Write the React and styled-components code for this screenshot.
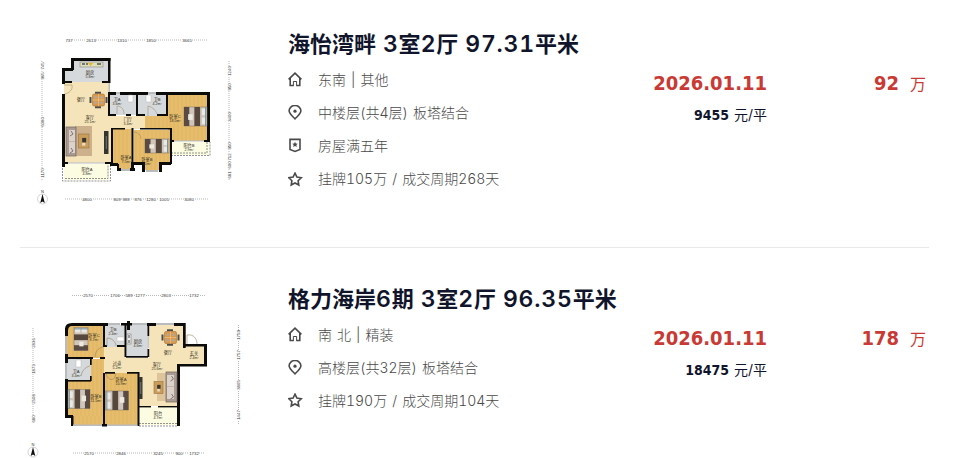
import React from 'react';
import styled, { createGlobalStyle } from 'styled-components';

const GlobalStyle = createGlobalStyle`
  * {
    box-sizing: border-box;
  }

  body {
    margin: 0;
    background: #fff;
    font-family: Inter, "Noto Sans CJK SC", sans-serif;
  }
`;

const List = styled.main`
  width: 909px;
  height: 100vh;
  margin-left: 20px;
  overflow: hidden;
`;

const Item = styled.article`
  display: grid;
  grid-template-columns: 268px minmax(0, 1fr) 160px 159px;
  height: 255px;
  padding: 35px 3px 0 0;
  border-bottom: 1px solid #e9e9eb;

  &:first-child {
    height: 248px;
    padding-top: 28px;
  }

  &:last-child {
    height: 210px;
    border-bottom: 0;
    overflow: hidden;
  }
`;

const Plan = styled.svg`
  display: block;
  width: 240px;
  height: 180px;
  font-family: "Liberation Sans", "Noto Sans CJK SC", sans-serif;
`;

const Title = styled.h2`
  height: 32px;
  margin: 0;
  color: #11152b;
  font-size: 22px;
  line-height: 32px;
  font-weight: 600;
  font-variant-numeric: tabular-nums;
  word-spacing: 1px;
  white-space: nowrap;
`;

const Digits = styled.span`
  font-size: 23px;
  line-height: 1;
  letter-spacing: 0.8px;
`;

const Facts = styled.ul`
  display: grid;
  grid-auto-rows: 33.2px;
  margin: 3px 0 0;
  padding: 0;
  list-style: none;
`;

const Fact = styled.li`
  display: flex;
  align-items: center;
  gap: 15px;
  color: #4a4a4a;
  font-size: 14px;
  line-height: 20px;
  font-weight: 300;
  font-variant-numeric: tabular-nums;
  word-spacing: 1.3px;
  white-space: nowrap;

  svg {
    flex: none;
  }
`;

const Deal = styled.div`
  padding-top: 39px;
  text-align: right;
  white-space: nowrap;
`;

const Strong = styled.div`
  color: #c93a35;
  font-family: "DejaVu Sans Condensed", "DejaVu Sans", sans-serif;
  font-stretch: condensed;
  font-size: 20px;
  line-height: 32px;
  font-weight: 700;
`;

const Unit = styled.span`
  margin-left: ${(props) => props.$gap}px;
  font-family: Inter, "Noto Sans CJK SC", sans-serif;
  font-size: ${(props) => props.$size}px;
  font-weight: 400;
`;

const Average = styled.div`
  color: #11152b;
  font-family: "DejaVu Sans Condensed", "DejaVu Sans", sans-serif;
  font-stretch: condensed;
  font-size: 14px;
  line-height: 32px;
  font-weight: 700;
`;

const iconPaths = {
  home: (
    <>
      <path d="M.6 7.4 7 1.2l6.4 6.2M2.2 6.2v7.3h2.9M11.8 6.2v7.3H8.9" />
      <path d="M5.4 14.2V9.3M8.6 14.2V9.3M5.4 9.5h3.2" strokeWidth="1" />
    </>
  ),
  pin: (
    <>
      <path d="M7 13.8C4.4 11.4 1.1 8.6 1.1 5.8a5.9 5.3 0 0 1 11.8 0c0 2.8-3.3 5.6-5.9 8Z" />
      <circle cx="7" cy="6.2" r="1.6" fill="currentColor" stroke="none" />
    </>
  ),
  badge: (
    <>
      <path d="M2 1.4h10v10.1l-5 1.9-5-1.9Z" />
      <path d="m7 3.8.8 1.8 2 .2-1.5 1.3.5 2L7 8l-1.8 1.1.5-2-1.5-1.3 2-.2Z" fill="currentColor" stroke="none" />
    </>
  ),
  star: <path d="m7 1.2 1.9 3.9 4.3.6-3.1 3 .7 4.3L7 11l-3.8 2 .7-4.3-3.1-3 4.3-.6Z" />,
};

function Icon({ name }) {
  return (
    <svg width="15" height="15" viewBox="0 0 15 15" fill="none" stroke="currentColor" strokeWidth="1.6">
      {iconPaths[name]}
    </svg>
  );
}

const fills = { tile: '#d6d9db', cream: '#f5e4b9', wood: '#e6bd6c', balcony: '#fcfce3', wall: '#0b0b0a', glass: '#b8bcbf' };

// every block is [x, y, width, height]
function Blocks({ kind, items }) {
  return items.map(([x, y, w, h]) => (
    <rect key={`${x}-${y}-${w}`} x={x} y={y} width={w} height={h} fill={fills[kind]} />
  ));
}

function Grain({ items }) {
  return items.map(([x, y, w, h]) => (
    <g key={`${x}-${y}`} stroke="#bf8c3b" strokeWidth=".4" opacity=".35">
      {Array.from({ length: Math.floor(w / 4) }, (_, i) => (
        <line key={i} x1={x + i * 4 + 2} y1={y} x2={x + i * 4 + 2} y2={y + h} />
      ))}
    </g>
  ));
}

function Label({ x, y, name, area }) {
  return (
    <g fill="#342e22" fontSize="4.2" textAnchor="middle">
      <text x={x} y={y}>{name}</text>
      {area && <text x={x} y={y + 4} fontSize="3.6">{area}</text>}
    </g>
  );
}

// the pillow end points right unless turned
function Bed({ x, y, w, h, turn = 0 }) {
  return (
    <g transform={`translate(${x} ${y}) rotate(${turn} ${w / 2} ${h / 2})`}>
      <rect width={w} height={h} fill="#cfc5ba" stroke="#80705f" strokeWidth=".5" />
      <rect width={w * 0.23} height={h} fill="#594b43" />
      <rect x={w * 0.45} width={w * 0.25} height={h} fill="#57483e" />
      <rect x={w * 0.18} y={h * 0.38} width={w * 0.2} height={h * 0.3} fill="#eee8df" />
      <rect x={w * 0.78} y={h * 0.08} width={w * 0.18} height={h * 0.36} rx="1" fill="#e9e8e4" />
      <rect x={w * 0.78} y={h * 0.55} width={w * 0.18} height={h * 0.36} rx="1" fill="#e9e8e4" />
      <path d={`M${w * 0.94} 0v${h}`} stroke="#72919c" />
    </g>
  );
}

function Dining({ x, y }) {
  return (
    <g transform={`translate(${x} ${y})`}>
      <path d="M-3.5-7.2h6M-3.5 7.2h6M-8-3v6M8-3v6" stroke="#4c4b4a" strokeWidth="2" />
      <rect x="-6" y="-6" width="12" height="12" rx="1.5" fill="#d99a4d" stroke="#a1713e" strokeWidth=".6" />
      <path d="M-6 0H6M0-6V6" stroke="#efc386" strokeWidth=".7" />
      <g fill="#a9abae">
        <circle cx="-2.8" cy="-2.8" r="1.2" />
        <circle cx="2.8" cy="-2.8" r="1.2" />
        <circle cx="-2.8" cy="2.8" r="1.2" />
        <circle cx="2.8" cy="2.8" r="1.2" />
      </g>
    </g>
  );
}

function Sofa({ x, y, w, h, flip }) {
  return (
    <g transform={`translate(${x} ${y})`}>
      <rect width={w} height={h} fill="#a99b93" stroke="#71645c" strokeWidth=".7" />
      <rect x={flip ? 1 : 3} y="3" width={w - 4} height={h / 2 - 3.5} fill="#ddd2ca" />
      <rect x={flip ? 1 : 3} y={h / 2} width={w - 4} height={h / 2 - 3} fill="#ddd2ca" />
      <path d={`M${w / 2} 4l2 3-3 2M${w / 2} ${h - 8}l2 3-3 2`} fill="none" stroke="#665b57" strokeWidth=".8" />
    </g>
  );
}

function CoffeeTable({ x, y, w, h }) {
  return (
    <g>
      <rect x={x} y={y} width={w} height={h} fill="#c99e5a" stroke="#987240" strokeWidth=".6" />
      <rect x={x + w * 0.35} y={y + h * 0.28} width={w * 0.38} height={h * 0.32} fill="#393631" />
      <rect x={x + w * 0.35} y={y + h * 0.63} width={w * 0.3} height={h * 0.2} fill="#e9ddc4" />
    </g>
  );
}

function Television({ x, y, w, h }) {
  return (
    <g>
      <rect x={x} y={y} width={w} height={h} fill="#343431" />
      <path d={`M${x + w / 2} ${y + 5}v${h - 10}`} stroke="#777" />
    </g>
  );
}

function Ruler({ from, to, at, vertical, marks }) {
  return (
    <g fill="#333" fontSize="4.3" textAnchor="middle">
      <path
        d={vertical ? `M${at} ${from}V${to}` : `M${from} ${at}H${to}`}
        stroke="#999"
        strokeWidth=".7"
        strokeDasharray="1 1"
      />
      {marks.map(([pos, value]) => {
        const cx = vertical ? at : pos;
        const cy = vertical ? pos : at;
        return (
          <g key={pos} transform={`translate(${cx} ${cy}) rotate(${vertical ? -90 : 0})`}>
            <rect x={-value.length * 1.25} y="-2" width={value.length * 2.5} height="4" fill="#fff" />
            <text y="1.5">{value}</text>
          </g>
        );
      })}
    </g>
  );
}

function Compass({ x, y }) {
  return (
    <g>
      <circle cx={x} cy={y} r="5" fill="#fff" stroke="#aaa" strokeWidth=".5" />
      <path d={`M${x} ${y - 5}l2.3 9-2.3-1.6-2.3 1.6Z`} fill="#111" />
      <text x={x} y={y - 6.5} fontSize="4" textAnchor="middle" fill="#333">N</text>
    </g>
  );
}

const bayWood = [[113, 129, 19, 36], [118, 160, 13, 10], [134, 130, 37, 33], [145, 116, 25, 13], [145, 160, 14, 10], [168, 95, 40, 46]];

function BayPlan() {
  return (
    <Plan viewBox="20 28 240 180">
      <Ruler from={66} to={208} at={40} marks={[[69, '737'], [91, '2613'], [122, '1310'], [151, '1850'], [187, '3665']]} />
      <Ruler from={61} to={180} at={42} vertical marks={[[66, '745'], [76, '965'], [122, '6080'], [173, '1170']]} />
      <Ruler from={61} to={180} at={229} vertical marks={[[71, '1240'], [87, '950'], [117, '3400'], [146, '950'], [157, '712'], [165, '600'], [175, '681']]} />
      <Ruler from={65} to={208} at={199} marks={[[87, '4800'], [117, '809'], [126, '988'], [138, '876'], [151, '1280'], [164, '1005'], [189, '3080']]} />
      <Blocks kind="tile" items={[[72, 60, 37, 22], [64, 70, 44, 12], [110, 94, 27, 21], [137, 94, 30, 22]]} />
      <Blocks kind="cream" items={[[64, 82, 46, 81], [109, 116, 36, 13], [108, 125, 5, 38]]} />
      <Blocks kind="wood" items={bayWood} />
      <Grain items={bayWood} />
      <Blocks kind="balcony" items={[[64, 164, 45, 16], [171, 142, 38, 13]]} />
      <g fill="none" stroke="#777" strokeWidth=".8" strokeDasharray="2 1">
        <path d="M62.5 165v16h48v-16M65 178.5h43V165" />
        <path d="M171 155.5h39V142M171 153h36v-11" />
      </g>
      <Blocks kind="glass" items={[[108.5, 82, 1.5, 10], [115, 92, 5, 2], [148, 92, 8, 2], [68, 162.5, 38, 1], [174, 140.5, 32, 1], [120, 169, 10, 2], [146, 170, 12, 2]]} />
      <Blocks
        kind="wall"
        items={[
          [71, 58, 39.5, 3], [71, 58, 3, 12], [62, 68, 11, 3], [62, 68, 3, 16], [62, 94, 3, 73], [62, 81, 10, 2],
          [108, 58, 2.5, 25], [102, 81, 8, 2], [108, 92, 8, 3], [120, 92, 28, 3], [156, 92, 54, 3], [108, 92, 2, 24],
          [108, 114, 8, 2], [126, 114, 5, 2], [136, 92, 2, 24], [137, 114, 8, 2], [157, 114, 11, 2], [166, 92, 2, 24],
          [207, 92, 3, 50], [170, 140, 4, 2], [204, 140, 6, 2], [111, 128, 2, 38], [112, 128, 13, 1.5],
          [131.5, 128, 2, 37], [140, 128, 31, 1.5], [170, 128, 2, 36], [110, 163, 8, 3], [117, 164, 2, 6],
          [117, 168, 4, 3], [130, 168, 5, 3], [131, 162, 3, 8], [133, 162, 12, 3], [142, 163, 3, 9],
          [159, 162, 3, 10], [160, 162, 11, 3], [62, 162, 6, 2], [105, 162, 8, 2],
        ]}
      />
      <rect x="80" y="62" width="23" height="5" fill="#dddeba" stroke="#777" strokeWidth=".5" />
      <path d="M82 64h3m1 0h2m9 0h4" stroke="#555" strokeWidth="1.4" />
      <path d="M88 63h5l-2.5 3Z" fill="#e4b72c" />
      <path d="M64 85h8c1 5-3 8-7 9M117 114v-8c5 0 7 4 7 8M148 116v-10c5 1 8 5 9 8M133 132c5 0 8 3 8 7" fill="none" stroke="#94825f" strokeWidth=".5" />
      <rect x="128" y="95" width="5" height="7" rx="1" fill="#fff" stroke="#aaa" strokeWidth=".4" />
      <rect x="146" y="95" width="5" height="7" rx="1" fill="#fff" stroke="#aaa" strokeWidth=".4" />
      <Dining x={98.5} y={100} />
      <rect x="75" y="126" width="17" height="30" fill="#cdb18c" />
      <Sofa x={66} y={127} w={10} h={29} />
      <CoffeeTable x={78.5} y={134} w={10.5} h={14} />
      <Television x={104} y={131} w={4.5} h={23} />
      <Bed x={184} y={107} w={23} h={19} />
      <Bed x={145} y={139} w={24} h={14} />
      <Label x={90} y={73.5} name="厨房" area="5.8m²" />
      <Label x={81} y={100.5} name="餐厅" />
      <Label x={90} y={118.5} name="客厅" area="25.1m²" />
      <Label x={117} y={101} name="卫A" area="3.6m²" />
      <Label x={157} y={101} name="卫B" area="4.2m²" />
      <Label x={128} y={121} name="门厅" area="3.4m²" />
      <Label x={175} y={118} name="卧室C" area="18.5m²" />
      <Label x={126} y={159} name="卧室A" area="7.5m²" />
      <Label x={147} y={160.5} name="卧室B" area="11m²" />
      <Label x={87} y={171} name="阳台A" area="4.8m²" />
      <Label x={189} y={147} name="阳台B" area="2.9m²" />
      <Compass x={42.5} y={199} />
    </Plan>
  );
}

const courtWood = [[67, 325, 37, 33], [91, 359, 13, 21], [67, 380, 37, 36], [73, 416, 31, 9], [105, 373, 33, 52]];

function CourtPlan() {
  return (
    <Plan viewBox="20 283 240 180">
      <Ruler from={72} to={205} at={295.5} marks={[[88, '2570'], [115, '1706'], [129, '589'], [140, '1277'], [166, '2803'], [194, '1732']]} />
      <Ruler from={328} to={424} at={33} vertical marks={[[343, '2836'], [369, '1873'], [399, '2508'], [419, '680']]} />
      <Ruler from={325} to={424} at={238.5} vertical marks={[[335, '1759'], [355, '1757'], [385, '3805'], [415, '1447']]} />
      <Ruler from={73} to={205} at={453} marks={[[89, '2570'], [121, '2846'], [158, '3245'], [179, '900'], [194, '1732']]} />
      <Blocks kind="tile" items={[[105, 325, 21, 22], [127, 325, 21, 32], [67, 359, 24, 21]]} />
      <Blocks kind="cream" items={[[149, 325, 35, 40], [104, 347, 22, 26], [126, 358, 52, 48], [183, 346, 22, 18]]} />
      <Blocks kind="wood" items={courtWood} />
      <Grain items={courtWood} />
      <Blocks kind="balcony" items={[[139, 407, 39, 18]]} />
      <path d="M139 423.5h39M139 426h39" stroke="#777" strokeWidth=".8" strokeDasharray="2 1" />
      <path d="M65 329q0-6 7-6h5v3h-5q-4 0-4 5h-3Z" fill={fills.wall} />
      <Blocks
        kind="wall"
        items={[
          [72, 323, 36, 3], [121, 323, 11, 2.5], [127, 321, 3, 9], [147, 323, 9, 3], [174, 323, 11, 3], [65, 328, 3, 8],
          [65, 354, 3, 9], [65, 379, 3, 39], [67, 357, 26, 2], [100, 357, 5, 2], [103, 323, 2, 23],
          [103, 345, 4, 2], [117, 345, 9, 2], [124.5, 323, 2, 34], [126, 356, 22, 1.7], [147.5, 323, 1.7, 13],
          [147.5, 349, 1.7, 8], [183, 323, 2.7, 25], [183, 344, 24, 2.5], [204, 344, 3, 22],
          [177, 364, 30, 2.5], [177, 364, 3, 62], [90, 359, 1.7, 6], [90, 376, 1.7, 5], [67, 380, 24, 1.6],
          [103, 373, 2, 53], [105, 372, 10, 1.7], [127, 372, 11, 1.7], [137.5, 372, 2, 54],
          [66, 415, 7, 3], [71, 416, 2.5, 10], [102, 424, 5, 2.5], [139, 406, 12, 1.4], [158, 406, 20, 1.4],
        ]}
      />
      <Blocks kind="glass" items={[[108, 323, 12, 2], [132, 323, 15, 2], [156, 323, 18, 2], [65, 336, 2, 18], [65, 363, 2, 16], [73, 424.5, 29, 1.5], [107, 424.5, 30, 1.5], [147.8, 336, 1, 12]]} />
      <path d="M187 344v-9c7-1 10 4 10 9M95 357c0-5 3-9 8-10M107 346v-8c5 0 9 4 9 8M90 366c-5 1-8 5-9 10M106 374c3 8 9 7 10-1" fill="none" stroke="#94825f" strokeWidth=".6" />
      <rect x="117" y="337" width="7" height="4" fill="#fff" stroke="#aaa" strokeWidth=".4" />
      <rect x="127" y="334" width="4" height="10" fill="#eee" stroke="#666" strokeWidth=".5" />
      <path d="M129 335v3m0 2v3" stroke="#444" />
      <rect x="76" y="360" width="5" height="7" fill="#fff" stroke="#aaa" strokeWidth=".4" />
      <Bed x={69.5} y={332} w={23} h={14} turn={-90} />
      <Bed x={68} y={389.5} w={22} h={19} turn={180} />
      <Bed x={105.5} y={391} w={23} h={19} turn={180} />
      <Dining x={170.5} y={337.5} />
      <rect x="157" y="373" width="9" height="28" fill="#dec49a" />
      <Sofa x={166} y={372} w={11} h={30} flip />
      <CoffeeTable x={154} y={381.5} w={9} h={12} />
      <Television x={139} y={377} w={3.5} h={22} />
      <Label x={94} y={337} name="卧室C" area="8.7m²" />
      <Label x={113} y={331} name="卫B" area="2.4m²" />
      <Label x={138} y={343} name="厨房" area="4.6m²" />
      <Label x={168} y={354} name="餐厅" />
      <Label x={194} y={355} name="玄关" area="2.4m²" />
      <Label x={117} y={365} name="过道" area="5.2m²" />
      <Label x={157} y={366} name="客厅" area="25.6m²" />
      <Label x={76} y={373} name="卫A" area="3.4m²" />
      <Label x={96} y={398} name="卧室B" area="11.5m²" />
      <Label x={121} y={381} name="卧室A" area="10.9m²" />
      <Label x={158} y={415} name="阳台" area="4.7m²" />
      <Compass x={33} y={452} />
    </Plan>
  );
}

// numbers in a title are set a little wider than the characters round them
function spaced(text) {
  return text.split(/([\d.]+)/).map((part, i) => (i % 2 ? <Digits key={i}>{part}</Digits> : part));
}

const listings = [
  {
    plan: BayPlan,
    title: '海怡湾畔 3室2厅 97.31平米',
    facts: [['home', '东南 | 其他'], ['pin', '中楼层(共4层) 板塔结合'], ['badge', '房屋满五年'], ['star', '挂牌105万 / 成交周期268天']],
    date: '2026.01.11',
    average: '9455',
    total: '92',
  },
  {
    plan: CourtPlan,
    title: '格力海岸6期 3室2厅 96.35平米',
    facts: [['home', '南 北 | 精装'], ['pin', '高楼层(共32层) 板塔结合'], ['star', '挂牌190万 / 成交周期104天']],
    date: '2026.01.11',
    average: '18475',
    total: '178',
  },
];

export default function App() {
  return (
    <>
      <GlobalStyle />
      <List>
        {listings.map(({ plan: PlanDrawing, title, facts, date, average, total }) => (
          <Item key={title}>
            <PlanDrawing />
            <div>
              <Title>{spaced(title)}</Title>
              <Facts>
                {facts.map(([icon, text]) => (
                  <Fact key={icon}>
                    <Icon name={icon} />
                    <span>{text}</span>
                  </Fact>
                ))}
              </Facts>
            </div>
            <Deal>
              <Strong>{date}</Strong>
              <Average>
                {average}
                <Unit $gap={5} $size={14}>元/平</Unit>
              </Average>
            </Deal>
            <Deal>
              <Strong>
                {total}
                <Unit $gap={11} $size={16}>万</Unit>
              </Strong>
            </Deal>
          </Item>
        ))}
      </List>
    </>
  );
}
